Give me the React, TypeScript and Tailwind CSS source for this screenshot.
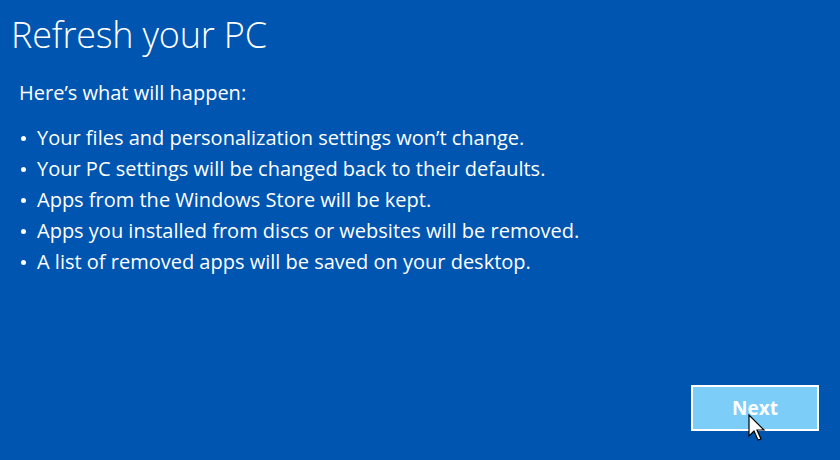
import React from "react";

const items = [
  "Your files and personalization settings won\u2019t change.",
  "Your PC settings will be changed back to their defaults.",
  "Apps from the Windows Store will be kept.",
  "Apps you installed from discs or websites will be removed.",
  "A list of removed apps will be saved on your desktop.",
];

function Cursor() {
  return (
    <svg width="20" height="30" viewBox="0 0 20 30" className="absolute left-[57px] top-[29px]">
      <path
        d="M1 1 L1 22 L6 17 L10 26 L13 25 L9 16 L16 16 Z"
        fill="#ffffff"
        stroke="#000000"
        strokeWidth="1.2"
        strokeLinejoin="miter"
      />
    </svg>
  );
}

export default function App() {
  return (
    <div
      className="w-[840px] h-[460px] bg-[#0055b0] text-white flex flex-col overflow-hidden"
      style={{ fontFamily: '"Open Sans", "Noto Sans", sans-serif' }}
    >
      <h1 className="pl-[11px] pt-[11px] text-[36px] leading-[48px] font-light tracking-[-0.2px]">
        Refresh your PC
      </h1>
      <p className="pl-[19px] mt-[21px] text-[20px] leading-[26px]">Here&rsquo;s what will happen:</p>
      <ul className="pl-[21px] mt-[16px] flex flex-col">
        {items.map((t) => (
          <li key={t} className="flex items-center text-[20px] leading-[31px]">
            <span className="w-[5px] h-[5px] rounded-full bg-white mr-[11px] mt-[2px]" />
            <span>{t}</span>
          </li>
        ))}
      </ul>
      <div className="flex-1" />
      <div className="flex justify-end pr-[21px] pb-[29px]">
        <div className="relative">
          <button className="w-[128px] h-[46px] border-[2px] border-white bg-[#7ccdf8] text-white font-bold text-[19px] flex items-center justify-center">
            Next
          </button>
          <Cursor />
        </div>
      </div>
    </div>
  );
}
